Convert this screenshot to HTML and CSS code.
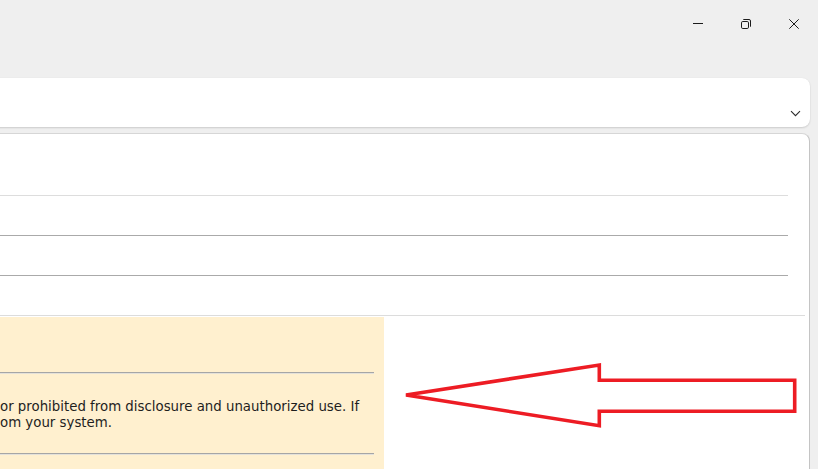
FILE: index.html
```html
<!DOCTYPE html>
<html lang="en">
<head>
<meta charset="utf-8">
<title>Message</title>
<link rel="stylesheet" href="styles.css">
</head>
<body>
<div class="window">
  <header class="titlebar">
    <button class="ctl" aria-label="Minimize">
      <svg width="10" height="10" viewBox="0 0 10 10"><path d="M0 4.5 H10" stroke="#1b1b1b" stroke-width="1" fill="none"/></svg>
    </button>
    <button class="ctl" aria-label="Restore">
      <svg width="10" height="10" viewBox="0 0 10 10" fill="none" stroke="#1b1b1b" stroke-width="1">
        <rect x="0.5" y="2.5" width="7" height="7" rx="1.3"/>
        <path d="M2.3 0.5 H8 a1.5 1.5 0 0 1 1.5 1.5 V7.7"/>
      </svg>
    </button>
    <button class="ctl" aria-label="Close">
      <svg width="10" height="10" viewBox="0 0 10 10" fill="none" stroke="#1b1b1b" stroke-width="1"><path d="M0.3 0.3 L9.7 9.7 M9.7 0.3 L0.3 9.7"/></svg>
    </button>
  </header>

  <div class="content">
    <div class="header-card">
      <svg class="chevron" width="11" height="7" viewBox="0 0 11 7"><path d="M1 1.2 L5.5 5.7 L10 1.2" stroke="#2b2b2b" stroke-width="1.1" fill="none"/></svg>
    </div>

    <div class="panel">
      <div class="rows">
        <div class="row row-first"></div>
        <div class="row row-dark"></div>
        <div class="row row-dark"></div>
        <div class="row row-last"></div>
      </div>
      <div class="divider"></div>
      <div class="disclaimer">
        <div class="rule"></div>
        <p class="notice">or prohibited from disclosure and unauthorized use. If<br>om your system.</p>
        <div class="rule"></div>
      </div>
    </div>
  </div>

  <svg class="annotation-arrow" width="400" height="72" viewBox="0 0 400 72">
    <polygon points="6,35 199.3,5 199.3,20.3 394.7,20.3 394.7,51.3 199.3,51.3 199.3,65.7" fill="none" stroke="#ed1c24" stroke-width="3.6" stroke-linejoin="miter" stroke-miterlimit="4"/>
  </svg>
</div>
</body>
</html>
```

FILE: styles.css
```css
html, body {
  margin: 0;
  padding: 0;
  height: 100%;
  overflow: hidden;
  background: #efefef;
  font-family: "DejaVu Sans", Verdana, sans-serif;
}

.window {
  position: relative;
  width: 818px;
  height: 469px;
  overflow: hidden;
}

.titlebar {
  display: flex;
  justify-content: flex-end;
  height: 47px;
}

.ctl {
  width: 48px;
  height: 47px;
  padding: 0;
  margin: 0;
  border: none;
  background: none;
  display: flex;
  align-items: center;
  justify-content: center;
}

.ctl svg {
  display: block;
}

.content {
  margin-left: -12px;
  margin-right: 8px;
  padding-top: 31px;
}

.header-card {
  height: 49px;
  background: #ffffff;
  border-radius: 8px;
  box-shadow: 0 1px 2px rgba(0, 0, 0, 0.14), 0 0 1px rgba(0, 0, 0, 0.08);
  display: flex;
  justify-content: flex-end;
  align-items: flex-end;
  padding: 0 9px 10px 0;
  box-sizing: border-box;
}

.chevron {
  display: block;
}

.panel {
  margin-top: 6px;
  background: #ffffff;
  border: 1px solid #d6d6d6;
  border-right-color: #c4c4c4;
  border-top-right-radius: 8px;
  padding-left: 11px;
  height: 400px;
}

.rows {
  margin-right: 21px;
}

.row {
  height: 39px;
  border-bottom: 1px solid #aaaaaa;
}

.row-first {
  height: 61px;
  border-bottom-color: #dddddd;
}

.row-last {
  border-bottom: none;
}

.divider {
  height: 1px;
  background: #dcdcdc;
  margin-right: 4px;
}

.disclaimer {
  margin-top: 1px;
  width: 384px;
  background: #fff0cf;
  padding: 55px 10px 30px 0;
  box-sizing: border-box;
}

.rule {
  border-top: 1px solid #a6a6a6;
  border-bottom: 1px solid #e4e1da;
}

.notice {
  margin: 25px 0 22px 0;
  font-size: 13.33px;
  line-height: 16px;
  color: #1e1e1e;
  white-space: nowrap;
}

.annotation-arrow {
  position: absolute;
  left: 400px;
  top: 360px;
}
```
